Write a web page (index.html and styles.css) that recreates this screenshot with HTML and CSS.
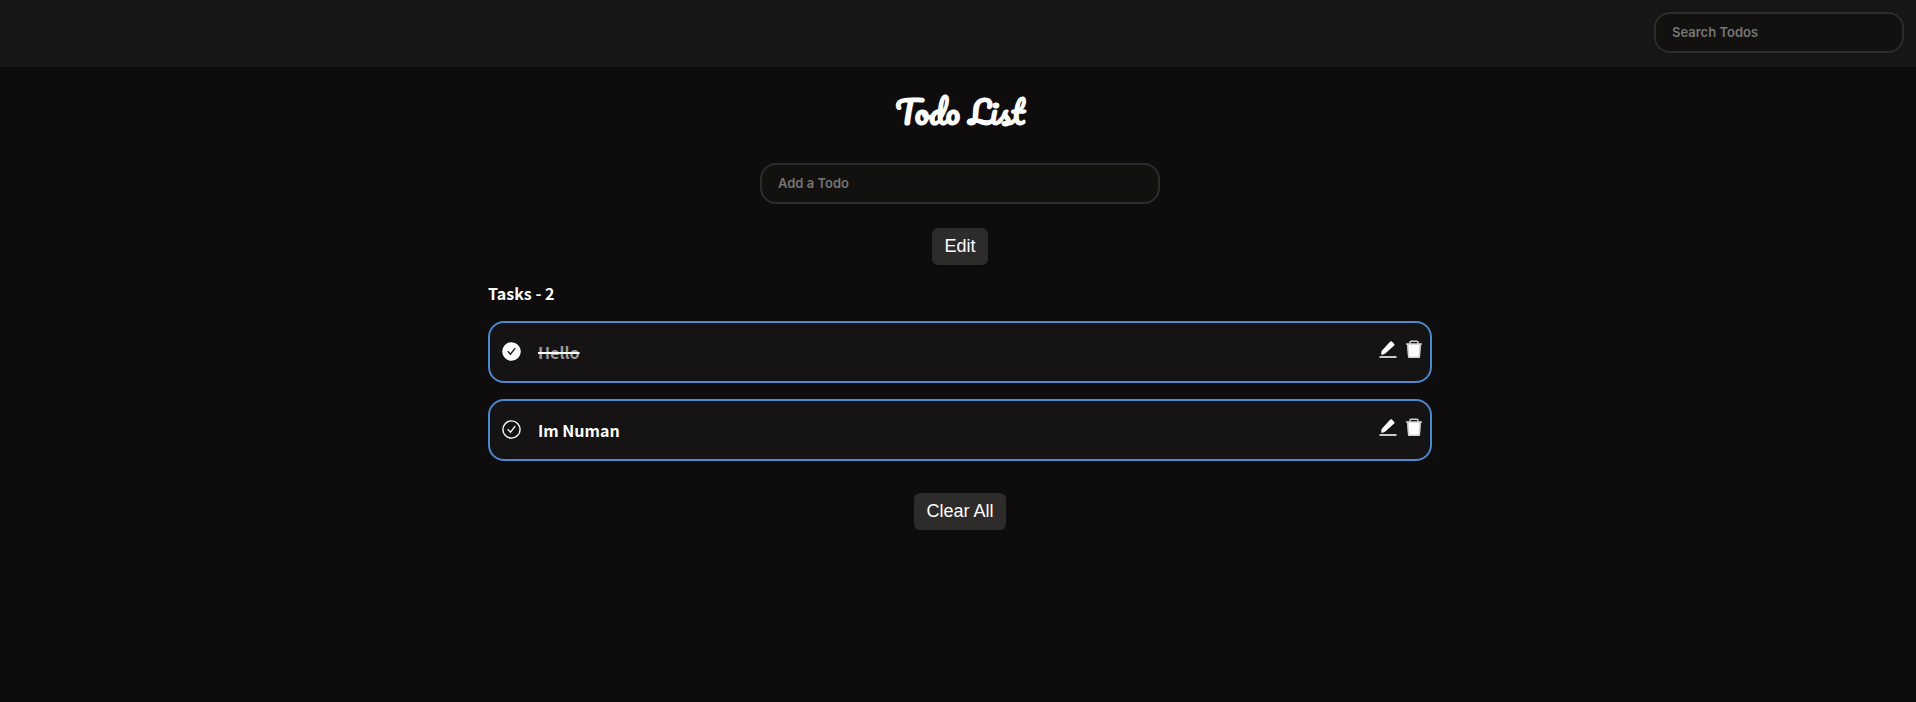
FILE: index.html
```html
<!DOCTYPE html>
<html lang="en">
<head>
<meta charset="utf-8">
<title>Todo List</title>
<link rel="stylesheet" href="styles.css">
</head>
<body>
<svg class="sprite" aria-hidden="true">
  <symbol id="pencil" viewBox="0 0 18 18">
    <path fill="#fff" d="M2.800 10.700 11.300 1.600q.8-.8 1.600 0l2.300 2.300q.8.8 0 1.600l-9.200 8.300q-1.400.9-3.600.9-.5-2 .4-4z"/>
    <path fill="#c9c9c9" d="M.5 16h17v2H.5z"/>
  </symbol>
  <symbol id="trash" viewBox="0 0 18 18">
    <path fill="#fff" d="M2.300 4h13.400l-.7 12.500q-.1 1.500-1.300 1.500H4.300q-1.200 0-1.300-1.500z"/>
    <path fill="none" stroke="#d0d0d0" stroke-width="1.500" d="M1 4h16M5 4V2.300q0-1 1-1h6q1 0 1 1V4M2.900 4.500l.7 11.700q.1 1.100 1.100 1.100h8.600q1 0 1.100-1.100l.7-11.700"/>
  </symbol>
</svg>
<header class="navbar">
  <input class="field field-search" type="search" placeholder="Search Todos" aria-label="Search Todos">
</header>
<main class="page">
  <h1 class="title">Todo List</h1>
  <form class="add-form">
    <input class="field field-add" type="text" placeholder="Add a Todo" aria-label="Add a Todo">
    <button class="btn" type="button">Edit</button>
  </form>
  <section class="tasks">
    <h2 class="tasks-heading">Tasks - 2</h2>
    <ul class="list">
      <li class="card">
        <button class="icon-btn" type="button" aria-label="Mark Hello as not done">
          <svg class="check" viewBox="0 0 20 20"><circle cx="9.500" cy="9.500" r="9.300" fill="#fff"/><path d="m5.700 9.300 2.800 2.900 4.700-6" fill="none" stroke="#151314" stroke-width="1.300"/></svg>
        </button>
        <span class="text text-done">Hello</span>
        <span class="actions">
          <button class="icon-btn" type="button" aria-label="Edit Hello"><svg class="icon"><use href="#pencil"/></svg></button>
          <button class="icon-btn" type="button" aria-label="Delete Hello"><svg class="icon"><use href="#trash"/></svg></button>
        </span>
      </li>
      <li class="card">
        <button class="icon-btn" type="button" aria-label="Mark Im Numan as done">
          <svg class="check" viewBox="0 0 20 20"><circle cx="9.500" cy="9.500" r="8.600" fill="none" stroke="#fff" stroke-width="1.400"/><path d="m5.700 9.300 2.800 2.900 4.700-6" fill="none" stroke="#fff" stroke-width="1.300"/></svg>
        </button>
        <span class="text">Im Numan</span>
        <span class="actions">
          <button class="icon-btn" type="button" aria-label="Edit Im Numan"><svg class="icon"><use href="#pencil"/></svg></button>
          <button class="icon-btn" type="button" aria-label="Delete Im Numan"><svg class="icon"><use href="#trash"/></svg></button>
        </span>
      </li>
    </ul>
  </section>
  <button class="btn" type="button">Clear All</button>
</main>
</body>
</html>
```
FILE: styles.css
```css
* {
  box-sizing: border-box;
}

body {
  margin: 0;
  min-height: 100vh;
  background: #0e0c0d;
  color: #fff;
  font-family: "Noto Sans CJK JP", "Noto Sans", sans-serif;
}

.sprite {
  display: none;
}

.navbar {
  display: flex;
  justify-content: flex-end;
  padding: 12px 12px 14px;
  background: #171516;
}

.field {
  height: 41px;
  padding: 0 16px 2px;
  border: 2px solid #2d2b2c;
  border-radius: 16px;
  background: #12110f;
  color: #fff;
  font: 600 13px Inter, sans-serif;
  outline: none;
  appearance: none;
}

.field::placeholder {
  color: #757575;
  opacity: 1;
}

.field-search {
  width: 250px;
}

.field-add {
  width: 400px;
  max-width: 100%;
}

.page {
  display: flex;
  flex-direction: column;
  align-items: center;
  padding: 20px 0 32px 4px;
}

.title {
  margin: 0;
  font: 700 32px/48px Pacifico, cursive;
}

.add-form {
  display: flex;
  flex-direction: column;
  align-items: center;
  gap: 24px;
  margin-top: 28px;
}

.btn {
  height: 37px;
  padding: 0 12px;
  border: 0;
  border-radius: 6px;
  background: #2e2b2b;
  color: #fff;
  font: 18px "Liberation Sans", Arial, sans-serif;
}

.tasks {
  width: 944px;
  max-width: 100%;
  margin: 16px 0 32px;
}

.tasks-heading {
  margin: 0 0 16px;
  font-size: 16px;
  font-weight: 700;
  line-height: 24px;
}

.list {
  display: grid;
  gap: 16px;
  margin: 0;
  padding: 0;
  list-style: none;
}

.card {
  display: flex;
  align-items: center;
  height: 62px;
  padding: 0 7px 0 12px;
  border: 2px solid #4c88cc;
  border-radius: 16px;
  background: #151314;
}

.icon-btn {
  display: flex;
  padding: 0;
  border: 0;
  background: none;
}

.check {
  width: 20px;
  height: 20px;
}

.icon {
  width: 18px;
  height: 18px;
}

.text {
  margin-left: 16px;
  font-size: 16px;
  font-weight: 700;
  line-height: 24px;
}

.text-done {
  color: #9b9b9b;
  text-decoration: line-through 2px #fff;
}

.actions {
  display: flex;
  gap: 8px;
  margin-left: auto;
  padding-bottom: 6px;
}
```
